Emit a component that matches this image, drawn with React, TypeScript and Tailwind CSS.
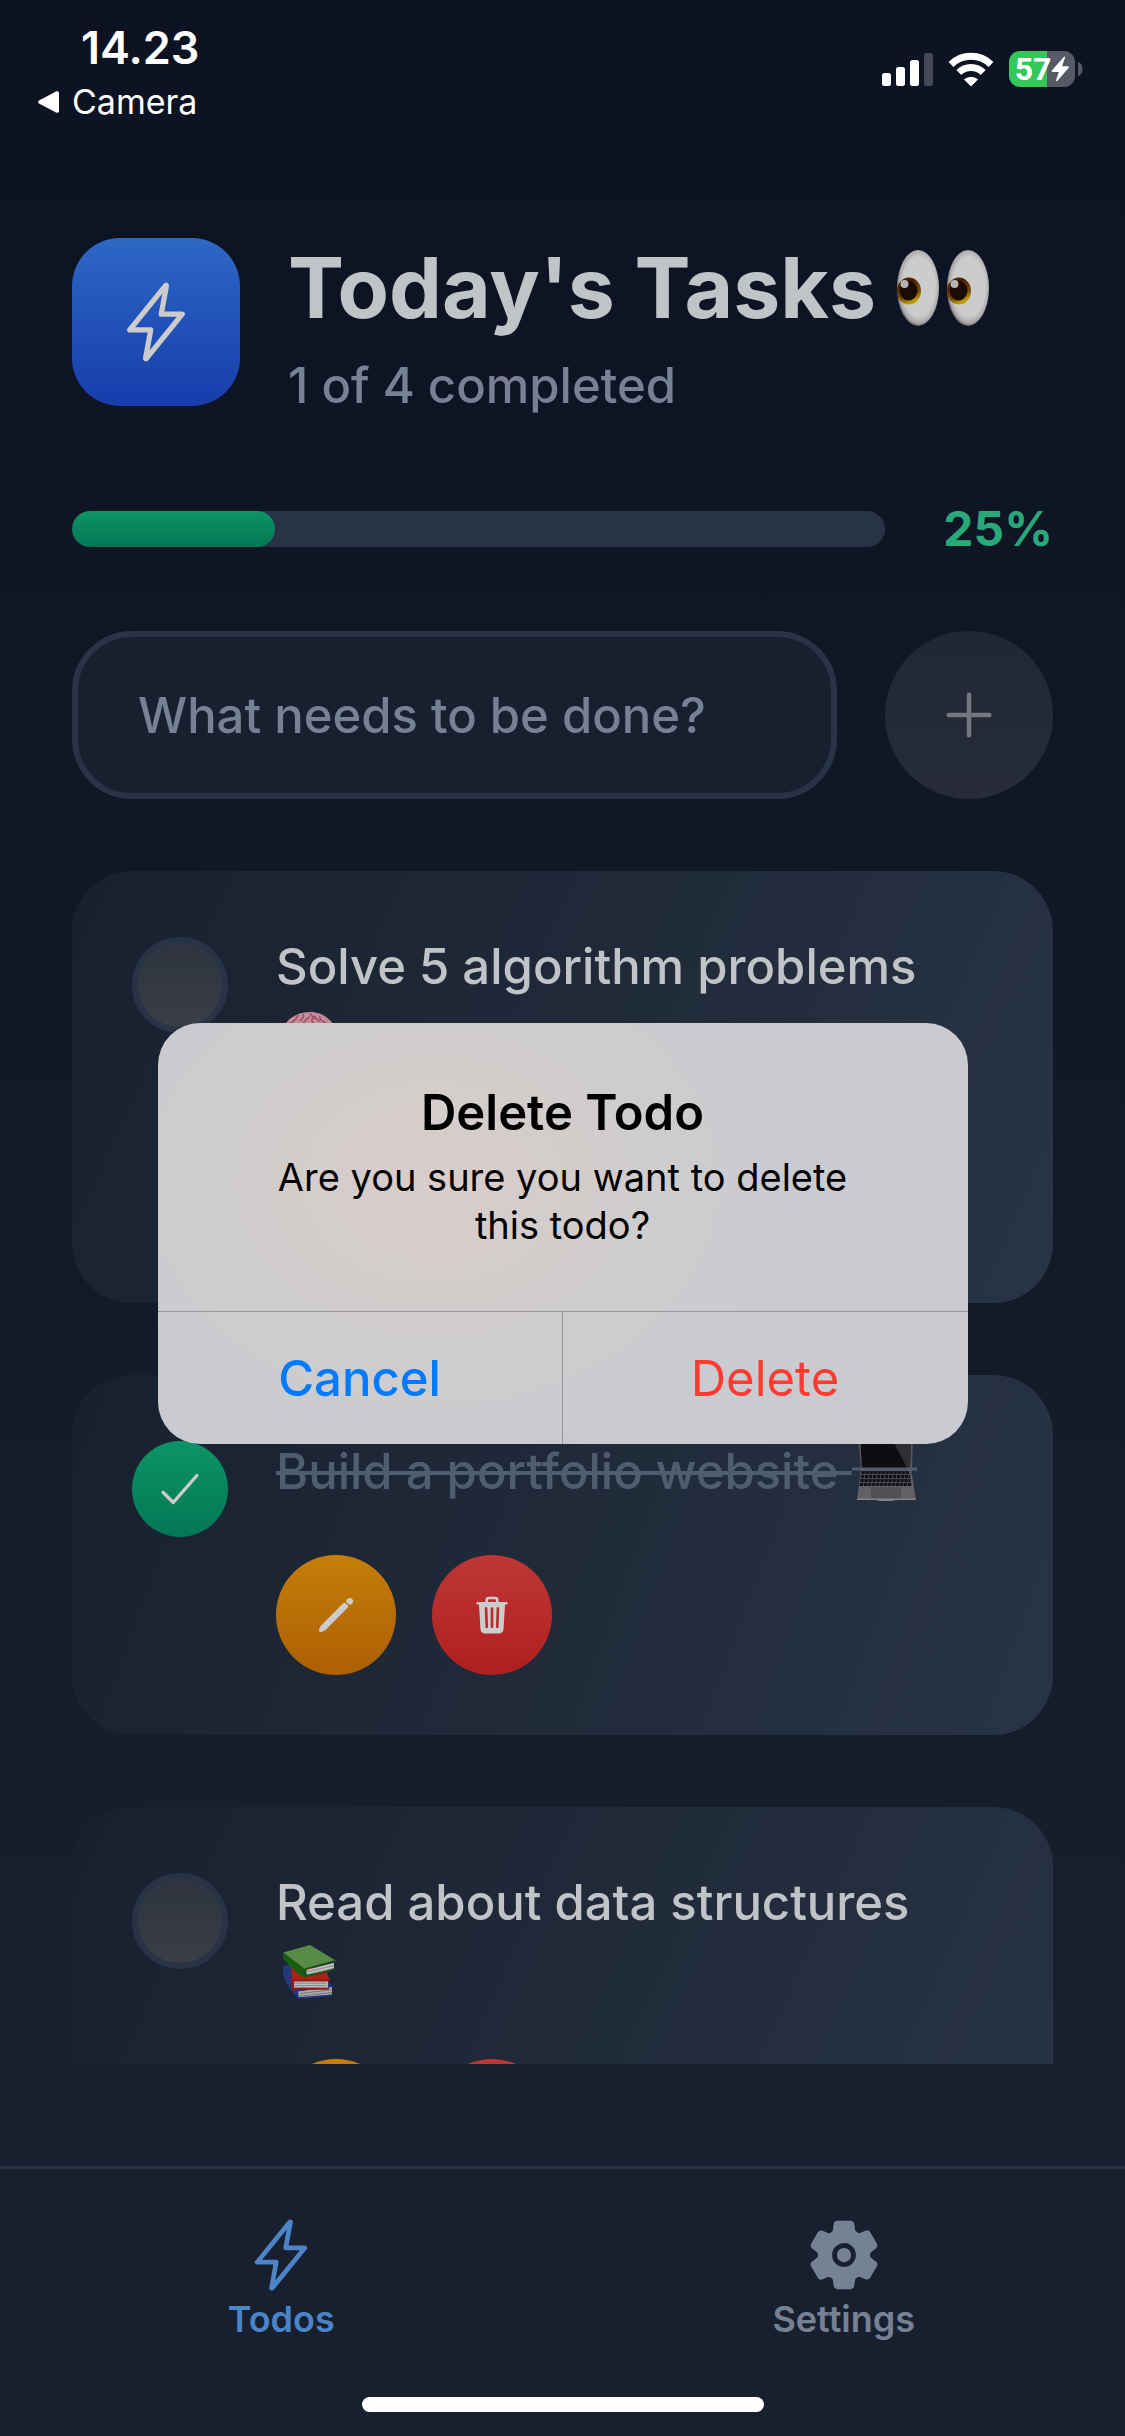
import React from "react";
import {
  IoAdd,
  IoCheckmark,
  IoFlashOutline,
  IoPencil,
  IoSettings,
  IoTrash,
} from "react-icons/io5";

function EyesEmoji({ className }: { className?: string }) {
  return (
    <svg viewBox="0 0 94 78" className={className} role="img" aria-label="👀">
      <defs>
        <radialGradient id="eye-white" cx="0.52" cy="0.48" r="0.52">
          <stop offset="0.75" stopColor="#ffffff" />
          <stop offset="0.92" stopColor="#d9d6d4" />
          <stop offset="1" stopColor="#8d8885" />
        </radialGradient>
        <linearGradient id="eye-iris" x1="0" y1="0" x2="0.4" y2="1">
          <stop offset="0.3" stopColor="#5f2a00" />
          <stop offset="0.75" stopColor="#9a6200" />
          <stop offset="1" stopColor="#f2c200" />
        </linearGradient>
      </defs>
      {[0, 50].map((x) => (
        <g key={x}>
          <ellipse cx={22 + x} cy="39" rx="21" ry="38" fill="url(#eye-white)" />
          <ellipse cx={13 + x} cy="42" rx="12" ry="13.5" fill="url(#eye-iris)" />
          <ellipse cx={12.5 + x} cy="41.5" rx="9" ry="10" fill="#220e00" />
          <circle cx={8.5 + x} cy="35" r="4" fill="#e6e0dc" />
        </g>
      ))}
    </svg>
  );
}

function BrainEmoji({ className }: { className?: string }) {
  return (
    <svg viewBox="0 0 65 60" className={className} role="img" aria-label="🧠">
      <path
        d="M5 32C5 14 18 4 34 4c16 0 27 12 27 26 0 10-5 16-12 17l-5 12-8-3-2-8c-10 4-29 2-29-16z"
        fill="#f2b3c3"
      />
      <path
        d="M12 16c6-2 9-6 10-9M20 17c8 2 8-6 14-8M34 5c2 6 8 4 9 9M44 8c-2 5 6 6 8 9M27 6c2 4-2 5-3 7M38 16c-4-3-2-6 2-8M10 28c8-4 12 4 20 0s12 6 24 0M14 38c8-5 14 4 24-1"
        fill="none"
        stroke="#cc5f7e"
        strokeWidth="1.6"
      />
    </svg>
  );
}

function LaptopEmoji({ className }: { className?: string }) {
  return (
    <svg viewBox="0 0 65 66" className={className} role="img" aria-label="💻">
      <path d="M6 0h55l-1 34H9z" fill="#6e6c72" />
      <path d="M8 0h51l-1 33H10z" fill="#0f1217" />
      <path d="M38 0h21l-1 33h-3z" fill="#3a3a42" />
      <path d="M9 34h50l5 31H5z" fill="#7a7980" />
      <path d="M9 36h49l2 15H7z" fill="#5d5c63" />
      {[0, 1, 2, 3].map((row) => (
        <path
          key={row}
          d={`M${9.5 - row / 2} ${37.5 + row * 4}h${48 + row}`}
          stroke="#17171c"
          strokeWidth="3"
          strokeDasharray="3.200 0.800"
        />
      ))}
      <path d="M19 52h30v12H19z" fill="#65646b" />
      <path d="M5 63.500h59v1.500H43l-2 1H27l-2-1H5z" fill="#a5a3a8" />
      <path d="M0 34h65" stroke="#64748b" strokeWidth="3" />
    </svg>
  );
}

function BooksEmoji({ className }: { className?: string }) {
  return (
    <svg
      viewBox="0 0 65 60"
      preserveAspectRatio="none"
      className={className}
      role="img"
      aria-label="📚"
    >
      <path d="M7 24l9-3 40 22-34 15C12 47 8 38 7 30z" fill="#2c469f" />
      <path d="M22 50l34-4v8l-33 4z" fill="#d8d8d8" />
      <path d="M24 53l32-4M23 56l33-4" stroke="#8f8f8f" strokeWidth="1" />
      <path d="M21 48l36-4v2l-35 5v6l34-3v2l-35 3z" fill="#2743a3" />
      <path d="M14 22l36 6 4 11H17z" fill="#dc281b" />
      <path d="M16 40h36v7H17z" fill="#eeeeee" />
      <path d="M18 42h33M18 44.500h33" stroke="#a8a8a8" strokeWidth="1" />
      <path d="M14 24c2 5 1 20 2 25h37v-2H18v-7h36v-2H17z" fill="#c01d14" />
      <path d="M7 9L34 1l26 17-31 9z" fill="#6fae57" />
      <path d="M7 9l22 18-1 9C21 32 11 22 7 15z" fill="#1f7413" />
      <path d="M29 28l29-8v6l-28 8z" fill="#efefef" />
      <path d="M30 30l28-7M30 33l28-7" stroke="#a8a8a8" strokeWidth="1" />
      <path d="M60 17l-31 9c-2 3-2 8 0 10l31-8v-1l-29 6c-1-2-1-4 0-6l29-9z" fill="#1d6a13" />
    </svg>
  );
}

function SignalIcon() {
  return (
    <svg viewBox="0 0 51 34" className="h-[34px] w-[51px]" role="img" aria-label="Signal">
      <rect x="0" y="21" width="9" height="13" rx="2.500" fill="#fff" />
      <rect x="14" y="15" width="9" height="19" rx="2.500" fill="#fff" />
      <rect x="28" y="8" width="9" height="26" rx="2.500" fill="#fff" />
      <rect x="42" y="1" width="9" height="33" rx="2.500" fill="#454954" />
    </svg>
  );
}

function WifiIcon() {
  return (
    <svg viewBox="0 0 46 34" className="h-[34px] w-[46px]" role="img" aria-label="Wi-Fi">
      <g fill="none" stroke="#fff">
        <path d="M3 12.500a28.500 28.500 0 0 1 40 0" strokeWidth="7" />
        <path d="M10.800 20.500a17.300 17.300 0 0 1 24.400 0" strokeWidth="7" />
      </g>
      <path d="M16 27.500a10 10 0 0 1 14 0L23 34.500z" fill="#fff" />
    </svg>
  );
}

function Battery() {
  return (
    <div className="flex items-center gap-[3px]">
      <div className="flex h-9 w-[66px] items-center justify-center rounded-[11px] bg-linear-to-r from-[#34c759] from-58% to-[#565a65] to-58%">
        <span className="font-[Roboto,sans-serif] text-[32px] leading-9 font-bold">57</span>
        <svg viewBox="0 0 18 26" className="h-[26px] w-[18px]" aria-hidden="true">
          <path
            d="M13 .8L1 14.200c-.8 1 0 1.800.8 1.800h6L5 24.200c-.3 1 .8 1.300 1.500.6L17.500 12c.8-1 0-1.800-.8-1.800H11l3-8.500c.3-1-.5-1.500-1-.9z"
            fill="#fff"
          />
        </svg>
      </div>
      <svg viewBox="0 0 5 14" className="h-[14px] w-[5px]" aria-hidden="true">
        <path d="M0 0c6 1.500 6 12.500 0 14z" fill="#565a65" />
      </svg>
    </div>
  );
}

type Todo = {
  id: number;
  title: string;
  emoji: React.ReactNode;
  done: boolean;
  surface: string;
};

const todos: Todo[] = [
  {
    id: 1,
    title: "Solve 5 algorithm problems",
    emoji: <BrainEmoji className="inline-block h-[60px] w-[65px] align-[-12px]" />,
    done: false,
    surface: "bg-[linear-gradient(114deg,#1e293b,#334155)]",
  },
  {
    id: 2,
    title: "Build a portfolio website",
    emoji: <LaptopEmoji className="inline-block h-[66px] w-[65px] align-[-12px]" />,
    done: true,
    surface: "bg-[linear-gradient(110deg,#1e293b,#334155)]",
  },
  {
    id: 3,
    title: "Read about data structures",
    emoji: <BooksEmoji className="inline-block h-[56px] w-[65px] align-[-8px]" />,
    done: false,
    surface: "bg-[linear-gradient(114deg,#1e293b,#334155)]",
  },
];

function TodoCard({ todo }: { todo: Todo }) {
  return (
    <li className={`flex shrink-0 gap-12 rounded-[60px] p-[60px] ${todo.surface}`}>
      <label className="relative mt-[6px] block size-24 shrink-0">
        <input
          type="checkbox"
          defaultChecked={todo.done}
          aria-label={todo.title}
          className="peer block size-24 appearance-none rounded-full border-[6px] border-[#334155] bg-linear-to-b from-[#3a4250] to-[#484e59] checked:border-0 checked:from-[#10b981] checked:to-[#059669]"
        />
        <IoCheckmark className="pointer-events-none absolute inset-0 m-auto hidden size-[54px] text-white peer-checked:block" />
      </label>
      <div className="min-w-0 flex-1">
        <p
          className={
            todo.done
              ? "h-[72px] text-[49px] leading-[72px] font-medium whitespace-nowrap text-[#64748b]"
              : "h-[144px] text-[49px] leading-[72px] font-medium text-[#f1f5f9]"
          }
        >
          <span className={todo.done ? "line-through decoration-4" : ""}>{todo.title} </span>
          {!todo.done && <br />}
          {todo.emoji}
        </p>
        <div className="mt-12 flex gap-9">
          <button
            type="button"
            aria-label="Edit"
            className="flex size-[120px] items-center justify-center rounded-full bg-linear-to-b from-[#f59e0b] to-[#d97706] text-white"
          >
            <IoPencil className="size-[42px]" />
          </button>
          <button
            type="button"
            aria-label="Delete"
            className="flex size-[120px] items-center justify-center rounded-full bg-linear-to-b from-[#ef4444] to-[#dc2626] text-white"
          >
            <IoTrash className="size-[42px]" />
          </button>
        </div>
      </div>
    </li>
  );
}

function StatusBar() {
  return (
    <div className="relative z-20 flex justify-between pt-[18px] pr-[42px] pl-[36px] text-white">
      <div>
        <p className="pl-[45px] text-[45px] leading-[60px] font-semibold">14.23</p>
        <a href="#camera" className="flex items-center gap-3 text-[34px] leading-[48px]">
          <svg viewBox="0 0 24 24" className="size-6" aria-hidden="true">
            <path
              d="M3 10.500L20 1.500c1.500-.7 3 0 3 1.500v18c0 1.500-1.500 2.200-3 1.500L3 13.500c-1.300-.8-1.300-2.200 0-3z"
              fill="#fff"
            />
          </svg>
          <span>Camera</span>
        </a>
      </div>
      <div className="mt-[33px] flex h-[36px] items-center gap-[15px]">
        <SignalIcon />
        <WifiIcon />
        <Battery />
      </div>
    </div>
  );
}

export default function App() {
  return (
    <div className="relative flex h-screen flex-col overflow-hidden bg-[#1e293b] font-['Inter','Liberation_Sans',sans-serif]">
      <main className="flex min-h-0 flex-1 flex-col bg-linear-to-b from-[#0f172a] to-[#1e293b] pb-[102px]">
        <StatusBar />

        <header className="mt-28 flex items-start gap-12 px-[72px]">
          <div className="flex size-[168px] shrink-0 items-center justify-center rounded-[48px] bg-linear-to-b from-[#3b82f6] to-[#1e4bd7] text-white">
            <IoFlashOutline className="size-[84px]" />
          </div>
          <div className="flex flex-col gap-[18px]">
            <h1 className="flex items-center gap-5 text-[84px] leading-[100px] font-bold whitespace-nowrap text-[#f1f5f9]">
              Today's Tasks
              <EyesEmoji className="h-[78px] w-[94px]" />
            </h1>
            <p className="text-[49px] leading-[60px] font-medium text-[#94a3b8]">
              1 of 4 completed
            </p>
          </div>
        </header>

        <div className="mt-[83px] flex items-center gap-12 px-[72px]">
          <div
            role="progressbar"
            aria-valuenow={25}
            aria-valuemin={0}
            aria-valuemax={100}
            aria-label="Completed"
            className="h-9 flex-1 overflow-hidden rounded-full bg-[#334155]"
          >
            <div className="h-full w-1/4 rounded-full bg-linear-to-b from-[#10b981] to-[#059669]" />
          </div>
          <span className="w-[120px] text-right text-[48px] leading-[60px] font-bold text-[#34d399]">
            25%
          </span>
        </div>

        <form className="mt-[72px] flex gap-12 px-[72px]" onSubmit={(e) => e.preventDefault()}>
          <input
            type="text"
            aria-label="New task"
            placeholder="What needs to be done?"
            className="h-[168px] min-w-0 flex-1 rounded-[60px] border-[6px] border-[#334155] bg-[#1e293b] px-[60px] text-[49px] font-medium text-[#f1f5f9] placeholder:text-[#94a3b8] placeholder:opacity-100"
          />
          <button
            type="submit"
            aria-label="Add task"
            className="flex size-[168px] shrink-0 items-center justify-center rounded-full bg-linear-to-b from-[#293241] to-[#313747] text-[#9295a0]"
          >
            <IoAdd className="size-[72px]" />
          </button>
        </form>

        <ul className="mt-[72px] flex min-h-0 flex-1 flex-col gap-[72px] overflow-hidden px-[72px]">
          {todos.map((todo) => (
            <TodoCard key={todo.id} todo={todo} />
          ))}
        </ul>
      </main>

      <nav className="flex h-[270px] shrink-0 border-t-[3px] border-[#334155] bg-[#1e293b] pt-12">
        <a href="#todos" className="flex flex-1 flex-col items-center gap-[2px] text-[#60a5fa]">
          <IoFlashOutline className="size-[76px]" />
          <span className="text-[36px] leading-[48px] font-semibold">Todos</span>
        </a>
        <a href="#settings" className="flex flex-1 flex-col items-center gap-[2px] text-[#94a3b8]">
          <IoSettings className="size-[76px]" />
          <span className="text-[36px] leading-[48px] font-semibold">Settings</span>
        </a>
      </nav>

      <div className="absolute inset-0 z-10 flex items-center justify-center bg-black/20 pt-[31px]">
        <div
          role="alertdialog"
          aria-modal="true"
          aria-labelledby="dialog-title"
          aria-describedby="dialog-message"
          className="w-[810px] max-w-full overflow-hidden rounded-[42px] bg-[#c9cbd1] bg-[radial-gradient(ellipse_360px_280px_at_34%_38%,#d9cdcb,#d2cdcb_40%,#c9cbd100)] text-center"
        >
          <div className="px-[90px] pt-[60px] pb-[46px]">
            <h2 id="dialog-title" className="text-[49px] leading-[60px] font-semibold text-black">
              Delete Todo
            </h2>
            <p id="dialog-message" className="mt-[10px] mb-4 text-[38px] leading-[48px] text-black">
              Are you sure you want to delete
              <br />
              this todo?
            </p>
          </div>
          <div className="grid grid-cols-2 border-t border-[#95979d]">
            <button
              type="button"
              className="h-[132px] border-r border-[#95979d] pt-[2px] text-[49px] font-medium text-[#007aff]"
            >
              Cancel
            </button>
            <button type="button" className="h-[132px] pt-[2px] text-[49px] text-[#ff3b30]">
              Delete
            </button>
          </div>
        </div>
      </div>

      <div className="absolute inset-x-0 bottom-6 z-20 mx-auto h-[15px] w-[402px] rounded-full bg-white" />
    </div>
  );
}
